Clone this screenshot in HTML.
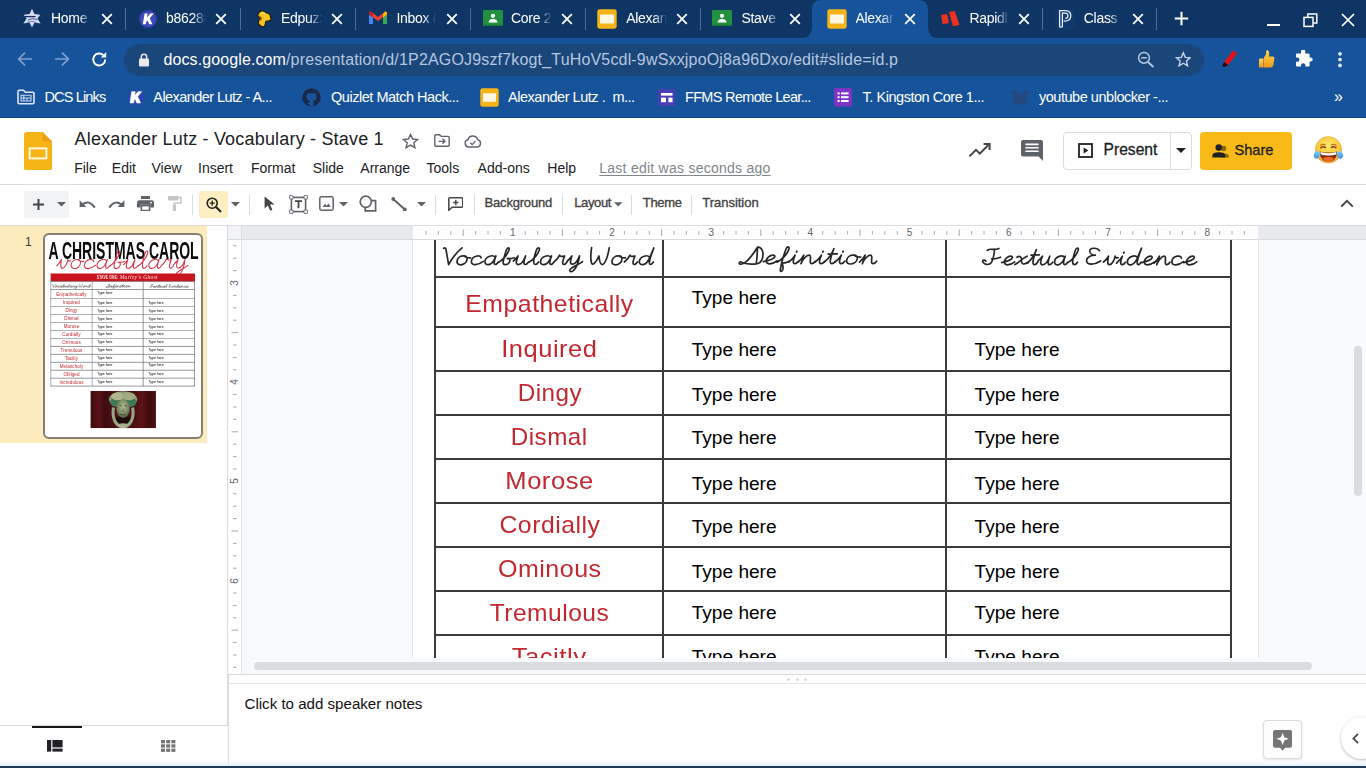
<!DOCTYPE html>
<html>
<head>
<meta charset="utf-8">
<title>Alexander Lutz - Vocabulary - Stave 1 - Google Slides</title>
<style>
*{box-sizing:border-box;margin:0;padding:0}
html,body{width:1366px;height:768px;overflow:hidden;background:#fff;font-family:"Liberation Sans",sans-serif;}
body{position:relative}
.abs{position:absolute}
/* ---------- chrome ---------- */
#tabstrip{position:absolute;left:0;top:0;width:1366px;height:38px;background:#0f3565}
#toolbar{position:absolute;left:0;top:38px;width:1366px;height:80px;background:#16539a;border-bottom:1px solid #0f4186}
.tsep{position:absolute;top:8px;width:1px;height:22px;background:#4c6c9c}
.tabt{position:absolute;top:0;height:38px;line-height:37px;font-size:14px;color:#fff;white-space:nowrap;overflow:hidden;letter-spacing:-0.3px;-webkit-mask-image:linear-gradient(to right,#000 calc(100% - 13px),transparent 100%);mask-image:linear-gradient(to right,#000 calc(100% - 13px),transparent 100%)}
#omni{position:absolute;left:124px;top:44px;width:1080px;height:32px;border-radius:16px;background:#1b4679}
#url{position:absolute;left:163.5px;top:44px;height:32px;line-height:32px;font-size:16px;color:#b4c6e0;white-space:nowrap;letter-spacing:0.17px}
#url b{font-weight:normal;color:#fff;letter-spacing:0.1px}
.bm{position:absolute;top:80px;height:36px;line-height:35px;font-size:14.5px;color:#fff;white-space:nowrap}
/* ---------- slides header ---------- */
#title{position:absolute;left:74.6px;top:126px;font-size:18px;letter-spacing:.19px;color:#202124;line-height:26px;white-space:nowrap}
.menu{position:absolute;top:157.7px;font-size:14px;line-height:20px;color:#202124;white-space:nowrap}
#hline{position:absolute;left:0;top:184px;width:1366px;height:1px;background:#dadce0}
#tline{position:absolute;left:0;top:225px;width:1366px;height:1px;background:#dadce0}
.tbtxt{position:absolute;top:194px;font-size:13px;line-height:18px;color:#444;letter-spacing:-0.35px;-webkit-text-stroke:.35px #444;white-space:nowrap}
.vsep{position:absolute;top:192px;width:1px;height:24px;background:#dadce0}
/* ---------- filmstrip ---------- */
#film{position:absolute;left:0;top:226px;width:228px;height:500px;background:#fff;border-right:1px solid #dadce0}
#filmsel{position:absolute;left:0;top:226px;width:207.3px;height:216.8px;background:#fcebbc}
#thumb{position:absolute;left:42.6px;top:232.6px;width:160.8px;height:206.4px;background:#fff;border:2px solid #857f74;border-radius:6px;overflow:hidden}
/* ---------- canvas ---------- */
#canvas{position:absolute;left:228px;top:226px;width:1138px;height:448px;background:#f8f9fa}
#slide{position:absolute;left:413px;top:240px;width:845px;height:418px;background:#fff;overflow:hidden}
.hl{position:absolute;left:434px;width:797.8px;height:2px;background:#3b3b3b}
.vl{position:absolute;top:240px;width:2px;height:418px;background:#3b3b3b}
.red{position:absolute;color:#c3272f;font-size:24px;line-height:30px;letter-spacing:.5px;white-space:nowrap;transform-origin:50% 50%}
.th{position:absolute;font-size:19.1px;line-height:24px;color:#000;white-space:nowrap}
.rn{position:absolute;width:20px;text-align:center;font-size:10px;line-height:14px;color:#5f6368}
.rv{position:absolute;left:225px;width:20px;height:20px;text-align:center;font-size:10px;line-height:20px;color:#5f6368;transform:rotate(-90deg)}
</style>
</head>
<body>
<div id="tabstrip"></div>
<div id="toolbar"></div>

<div class="tsep" style="left:124.5px"></div>
<div class="tsep" style="left:239.5px"></div>
<div class="tsep" style="left:354.5px"></div>
<div class="tsep" style="left:469.5px"></div>
<div class="tsep" style="left:584.5px"></div>
<div class="tsep" style="left:699.5px"></div>
<div class="tsep" style="left:1041.5px"></div>
<div class="tsep" style="left:1155.5px"></div>
<svg class="abs" style="left:802px;top:0" width="136" height="38" viewBox="0 0 136 38"><path d="M0 38 Q9 38 10 28 V9 Q10 0 20 0 H116 Q126 0 126 9 V28 Q127 38 136 38 Z" fill="#16539a"/></svg>
<svg class="abs" style="left:22px;top:8px" width="20" height="20" viewBox="0 0 20 20"><path d="M10 .8 L12.4 6 L18.3 6.8 L15.4 10.5 L18.6 15.5 L12.6 14.6 L10 19.4 L7.4 14.6 L1.4 15.5 L4.6 10.5 L1.7 6.8 L7.6 6 Z" fill="#d5dcf0"/><path d="M3 8.6 H13.5" stroke="#132c66" stroke-width="1.3"/><path d="M6 12 Q10 9.5 15 11.5" stroke="#44588e" stroke-width="1" fill="none"/><path d="M5 14.2 Q10 12.5 14 14.5" stroke="#6f7fb0" stroke-width="1" fill="none"/></svg>
<div class="tabt" style="left:51.0px;width:41.0px">Home</div>
<svg class="abs" style="left:101px;top:13px" width="12" height="12" viewBox="0 0 12 12"><path d="M1.2 1.2 L10.8 10.8 M10.8 1.2 L1.2 10.8" stroke="#fff" stroke-width="1.8" fill="none"/></svg>
<svg class="abs" style="left:137.5px;top:9px" width="20" height="20" viewBox="0 0 20 20"><circle cx="10" cy="10" r="9.3" fill="#2c3a9a"/><circle cx="10" cy="10" r="8" fill="#3f49b8"/><path d="M6.6 4.6 H9.6 L8.9 8.6 L12.4 4.6 H15.8 L11.7 9.2 L14.4 15.2 H11.2 L9.6 11.4 L8.2 12.9 L7.8 15.2 H4.8 Z" fill="#fff"/></svg>
<div class="tabt" style="left:166.0px;width:40.0px">b86288</div>
<svg class="abs" style="left:215px;top:13px" width="12" height="12" viewBox="0 0 12 12"><path d="M1.2 1.2 L10.8 10.8 M10.8 1.2 L1.2 10.8" stroke="#fff" stroke-width="1.8" fill="none"/></svg>
<svg class="abs" style="left:254px;top:9px" width="20" height="20" viewBox="0 0 20 20"><path d="M7.9 1.6 Q9.4 1.8 10.6 2.8 L12.6 4 Q14.6 4.2 15.3 5.2 Q16.4 6.4 16.5 7.9 L17.3 9.8 Q16.8 11.4 15.3 11.8 L12.2 12.2 Q11.4 13 11.4 14.5 Q11.2 17 9.8 17.7 Q8 18 6.7 16.9 Q4.8 16 4.4 14.5 L4.4 12.2 Q5.2 11 6.3 10.6 L6.7 9.1 L4.4 7.9 Q3.6 6.8 4 5.5 Q4.4 3.8 5.5 3.2 Q6.6 1.8 7.9 1.6 Z" fill="#f9c324" stroke="#1c1a0c" stroke-width="1.2" stroke-linejoin="round"/><path d="M5.4 7.2 L7.6 9.6 L5.6 11.8" stroke="#b9650c" stroke-width="1.3" fill="none"/><path d="M7.4 4 Q9.6 3.4 11.4 5" stroke="#ffe36a" stroke-width="1.4" fill="none"/></svg>
<div class="tabt" style="left:281.0px;width:40.6px">Edpuzzle</div>
<svg class="abs" style="left:330.6px;top:13px" width="12" height="12" viewBox="0 0 12 12"><path d="M1.2 1.2 L10.8 10.8 M10.8 1.2 L1.2 10.8" stroke="#fff" stroke-width="1.8" fill="none"/></svg>
<svg class="abs" style="left:368.5px;top:11px" width="18" height="14" viewBox="0 0 18 14"><path d="M0 2.2 V13 H4 V5.3 Z" fill="#4285f4"/><path d="M18 2.2 V13 H14 V5.3 Z" fill="#34a853"/><path d="M0 2.2 Q0 .4 1.8 .6 L9 6 L9 10 L0 3.4 Z" fill="#ea4335"/><path d="M18 2.2 Q18 .4 16.2 .6 L9 6 L9 10 L18 3.4 Z" fill="#ea4335"/><path d="M14 3 L16.2 .6 Q18 .4 18 2.2 V3.4 L14 6.4 Z" fill="#fbbc04"/><path d="M4 3 L1.8 .6 Q0 .4 0 2.2 V3.4 L4 6.4 Z" fill="#c5221f"/></svg>
<div class="tabt" style="left:396.4px;width:40.1px">Inbox (1</div>
<svg class="abs" style="left:445.5px;top:13px" width="12" height="12" viewBox="0 0 12 12"><path d="M1.2 1.2 L10.8 10.8 M10.8 1.2 L1.2 10.8" stroke="#fff" stroke-width="1.8" fill="none"/></svg>
<svg class="abs" style="left:482.5px;top:10px" width="20" height="17" viewBox="0 0 20 17"><rect x="0" y="0" width="20" height="16" rx="1.2" fill="#21903f"/><rect x="0" y="14.6" width="20" height="1.4" fill="#187a33"/><circle cx="10" cy="5.8" r="2.1" fill="#fff"/><path d="M5.6 12.6 Q5.6 9 10 9 Q14.4 9 14.4 12.6 Z" fill="#fff"/></svg>
<div class="tabt" style="left:511.0px;width:40.7px">Core 2 </div>
<svg class="abs" style="left:560.7px;top:13px" width="12" height="12" viewBox="0 0 12 12"><path d="M1.2 1.2 L10.8 10.8 M10.8 1.2 L1.2 10.8" stroke="#fff" stroke-width="1.8" fill="none"/></svg>
<svg class="abs" style="left:597.4px;top:9px" width="20" height="20" viewBox="0 0 20 20"><rect x=".3" y=".3" width="19.4" height="19.4" rx="2.4" fill="#f5b417"/><rect x="3" y="5.6" width="14" height="8.8" rx=".6" fill="#fff7e4"/></svg>
<div class="tabt" style="left:626.2px;width:40.4px">Alexande</div>
<svg class="abs" style="left:675.6px;top:13px" width="12" height="12" viewBox="0 0 12 12"><path d="M1.2 1.2 L10.8 10.8 M10.8 1.2 L1.2 10.8" stroke="#fff" stroke-width="1.8" fill="none"/></svg>
<svg class="abs" style="left:712px;top:10px" width="20" height="17" viewBox="0 0 20 17"><rect x="0" y="0" width="20" height="16" rx="1.2" fill="#21903f"/><rect x="0" y="14.6" width="20" height="1.4" fill="#187a33"/><circle cx="10" cy="5.8" r="2.1" fill="#fff"/><path d="M5.6 12.6 Q5.6 9 10 9 Q14.4 9 14.4 12.6 Z" fill="#fff"/></svg>
<div class="tabt" style="left:741.4px;width:39.0px">Stave 1</div>
<svg class="abs" style="left:789.4px;top:13px" width="12" height="12" viewBox="0 0 12 12"><path d="M1.2 1.2 L10.8 10.8 M10.8 1.2 L1.2 10.8" stroke="#fff" stroke-width="1.8" fill="none"/></svg>
<svg class="abs" style="left:826.6px;top:9px" width="20" height="20" viewBox="0 0 20 20"><rect x=".3" y=".3" width="19.4" height="19.4" rx="2.4" fill="#f5b417"/><rect x="3" y="5.6" width="14" height="8.8" rx=".6" fill="#fff7e4"/></svg>
<div class="tabt" style="left:855.5px;width:39.3px">Alexande</div>
<svg class="abs" style="left:903.8px;top:13px" width="12" height="12" viewBox="0 0 12 12"><path d="M1.2 1.2 L10.8 10.8 M10.8 1.2 L1.2 10.8" stroke="#fff" stroke-width="1.8" fill="none"/></svg>
<svg class="abs" style="left:940.4px;top:10px" width="20" height="17" viewBox="0 0 20 17"><path d="M1 5.1 L7.2 4 L8.9 13.3 L2.5 14.1 Z" fill="#ee311e"/><path d="M8.9 2 L14.8 1 L19.5 15.1 L13 16.2 Z" fill="#ee311e"/></svg>
<div class="tabt" style="left:969.4px;width:39.3px">Rapidly</div>
<svg class="abs" style="left:1017.7px;top:13px" width="12" height="12" viewBox="0 0 12 12"><path d="M1.2 1.2 L10.8 10.8 M10.8 1.2 L1.2 10.8" stroke="#fff" stroke-width="1.8" fill="none"/></svg>
<svg class="abs" style="left:1054.6px;top:9px" width="20" height="20" viewBox="0 0 20 20"><rect x="0" y="0" width="20" height="20" fill="#11396c"/><path d="M4.6 18 V1.6 H10.4 Q15.8 1.8 15.8 6.8 Q15.8 11.6 10.6 12 L8.6 12 M7.4 18 V4.2 H10.2 Q13 4.4 13 6.8 Q13 9.2 10.2 9.4 M4.6 18 H7.4" fill="none" stroke="#e8f0ff" stroke-width="1.25"/></svg>
<div class="tabt" style="left:1083.8px;width:38.7px">Class S</div>
<svg class="abs" style="left:1131.5px;top:13px" width="12" height="12" viewBox="0 0 12 12"><path d="M1.2 1.2 L10.8 10.8 M10.8 1.2 L1.2 10.8" stroke="#fff" stroke-width="1.8" fill="none"/></svg>
<svg class="abs" style="left:1174px;top:11px" width="15" height="15" viewBox="0 0 15 15"><path d="M7.5 .8 V14.2 M.8 7.5 H14.2" stroke="#fff" stroke-width="2"/></svg>
<div class="abs" style="left:1267px;top:24px;width:13px;height:2px;background:#fff"></div>
<svg class="abs" style="left:1303px;top:13px" width="15" height="15" viewBox="0 0 15 15"><path d="M4.8 4 V1 H13.8 V10 H10.6" fill="none" stroke="#fff" stroke-width="1.5"/><rect x="1" y="4.4" width="9" height="9" fill="none" stroke="#fff" stroke-width="1.5"/></svg>
<svg class="abs" style="left:1341px;top:13px" width="14" height="14" viewBox="0 0 14 14"><path d="M1 1 L13 13 M13 1 L1 13" stroke="#fff" stroke-width="1.7"/></svg>
<div id="omni"></div>
<div id="url"><b>docs.google.com</b>/presentation/d/1P2AGOJ9szf7kogt_TuHoV5cdl-9wSxxjpoOj8a96Dxo/edit#slide=id.p</div>

<!-- nav icons -->
<svg class="abs" style="left:17px;top:51px" width="16" height="16" viewBox="0 0 16 16"><path d="M15 8 H2 M8 1.6 L1.6 8 L8 14.4" fill="none" stroke="#7f9fd0" stroke-width="1.7"/></svg>
<svg class="abs" style="left:54px;top:51px" width="16" height="16" viewBox="0 0 16 16"><path d="M1 8 H14 M8 1.6 L14.4 8 L8 14.4" fill="none" stroke="#7f9fd0" stroke-width="1.7"/></svg>
<svg class="abs" style="left:91px;top:51px" width="17" height="17" viewBox="0 0 17 17"><path d="M14.2 8.5 A6 6 0 1 1 12.4 4.2" fill="none" stroke="#fff" stroke-width="1.9"/><path d="M15.2 1 V6.4 H9.8 Z" fill="#fff"/></svg>
<svg class="abs" style="left:138px;top:53px" width="12" height="14" viewBox="0 0 12 14"><rect x="1" y="5.4" width="10" height="8" rx="1.2" fill="#e9e9ea"/><path d="M3.3 6 V4 A2.7 2.7 0 0 1 8.7 4 V6" fill="none" stroke="#e9e9ea" stroke-width="1.5"/></svg>
<svg class="abs" style="left:1137px;top:51px" width="18" height="17" viewBox="0 0 18 17"><circle cx="7" cy="6.8" r="5.4" fill="none" stroke="#b9c8e2" stroke-width="1.5"/><path d="M11 11 L16.4 16" stroke="#b9c8e2" stroke-width="1.8"/><path d="M4.2 6.8 H9.8" stroke="#b9c8e2" stroke-width="1.5"/></svg>
<svg class="abs" style="left:1174.8px;top:50.6px" width="16.6" height="16.6" viewBox="0 0 18 18"><path d="M9 2 L11.1 6.9 L16.4 7.4 L12.4 10.9 L13.6 16.1 L9 13.3 L4.4 16.1 L5.6 10.9 L1.6 7.4 L6.9 6.9 Z" fill="none" stroke="#c9d5ea" stroke-width="1.5" stroke-linejoin="miter"/></svg>
<!-- extensions -->
<svg class="abs" style="left:1220px;top:49px" width="19" height="20" viewBox="0 0 19 20"><path d="M13.2 1.6 L17 4.6 L8 16 L4 13 Z" fill="#e01217"/><path d="M4 13 L8 16 L5 17.8 L2 17.6 Z" fill="#2a0a10"/></svg>
<svg class="abs" style="left:1257px;top:49px" width="19" height="20" viewBox="0 0 19 20"><defs><linearGradient id="tg" x1="0" y1="0" x2="0" y2="1"><stop offset="0" stop-color="#fdd54a"/><stop offset="1" stop-color="#f29a1c"/></linearGradient></defs><path d="M2 9.6 H6 V18.4 H2 Z" fill="url(#tg)"/><path d="M6.4 9.4 L9 5.2 L9.2 2 Q9.4 .8 10.6 1.2 Q12.4 2 12.2 4.6 L11.8 7.6 H16 Q17.8 7.8 17.4 9.6 L16.2 16.6 Q15.8 18.4 14 18.4 H6.4 Z" fill="url(#tg)"/></svg>
<svg class="abs" style="left:1294px;top:50px" width="19" height="18" viewBox="0 0 19 18"><path d="M7 1.2 A2.1 2.1 0 0 1 11.2 1.6 V3.4 H14.6 Q15.6 3.4 15.6 4.4 V7.4 H16.6 A2.1 2.1 0 0 1 16.6 11.6 H15.6 V15.6 Q15.6 16.6 14.6 16.6 H11.4 V15.4 A2.2 2.2 0 0 0 7 15.4 V16.6 H3 Q2 16.6 2 15.6 V11.8 H3.2 A2.1 2.1 0 0 0 3.2 7.4 H2 V4.4 Q2 3.4 3 3.4 H7 Z" fill="#fbfbf6"/></svg>
<svg class="abs" style="left:1337px;top:50px" width="6" height="19" viewBox="0 0 6 19"><circle cx="3" cy="3.8" r="1.85" fill="#e6eefb"/><circle cx="3" cy="9.6" r="1.85" fill="#e6eefb"/><circle cx="3" cy="15.4" r="1.85" fill="#e6eefb"/></svg>
<!-- bookmarks -->
<svg class="abs" style="left:17px;top:89px" width="18" height="16" viewBox="0 0 18 16"><path d="M1 2.4 Q1 1.2 2.2 1.2 H6.6 L8.4 3.2 H15.8 Q17 3.2 17 4.4 V13.6 Q17 14.8 15.8 14.8 H2.2 Q1 14.8 1 13.6 Z" fill="none" stroke="#dfe7f5" stroke-width="1.6"/><path d="M4 6.2 H14 V12 H4 Z M4 9 H14 M6.8 6.2 V12 M10 9 V12" fill="none" stroke="#c9d6ee" stroke-width="1.1"/></svg>
<div class="bm" style="left:44.5px;letter-spacing:-0.85px">DCS Links</div>
<svg class="abs" style="left:127.5px;top:88.6px" width="16.4" height="16.4" viewBox="0 0 16 16"><circle cx="8" cy="8" r="7.8" fill="#2c44b2"/><path d="M3.6 2.6 H7 L6.4 6.6 L9.8 2.6 H13.4 L9.4 7.2 L12.2 13.6 H8.6 L7.2 9.8 L5.9 11.2 L5.5 13.6 H2 Z" fill="#fff" stroke="#fff" stroke-width=".6" stroke-linejoin="round"/></svg>
<div class="bm" style="left:153.3px;letter-spacing:-0.57px">Alexander Lutz - A...</div>
<svg class="abs" style="left:302px;top:88px" width="19" height="19" viewBox="0 0 19 19"><circle cx="9.5" cy="9.5" r="9.2" fill="#182848"/><path d="M5.2 4.4 L6.8 5.6 Q9.5 4.8 12.2 5.6 L13.8 4.4 L14 7 Q15.2 9 14.2 11 Q13.2 12.8 11 13 L11.6 14.4 V18 H7.4 V16 Q5.4 16.4 4.6 14.4 Q6 15.4 7.4 14.6 L8 13 Q5.8 12.8 4.8 11 Q3.8 9 5 7 Z" fill="#19539b"/></svg>
<div class="bm" style="left:331px;letter-spacing:-0.47px">Quizlet Match Hack...</div>
<svg class="abs" style="left:479.5px;top:88px" width="19" height="19" viewBox="0 0 19 19"><rect x=".3" y=".3" width="18.4" height="18.4" rx="2.2" fill="#f5b417"/><rect x="3" y="5.2" width="13" height="8.6" rx=".6" fill="#fff7e4"/></svg>
<div class="bm" style="left:508px;letter-spacing:-0.47px">Alexander Lutz .&nbsp; m...</div>
<svg class="abs" style="left:657.5px;top:89px" width="17.5" height="17" viewBox="0 0 17.5 17"><rect x="0" y="0" width="17.5" height="17" rx="1.4" fill="#4a3eb6"/><rect x="3" y="4" width="11.5" height="2.6" fill="#fff"/><rect x="3" y="8.6" width="5" height="4.6" fill="#fff"/><rect x="10.4" y="8.6" width="4.1" height="4.6" fill="#fff"/></svg>
<div class="bm" style="left:685px;letter-spacing:-0.68px">FFMS Remote Lear...</div>
<svg class="abs" style="left:834px;top:88px" width="18" height="18.5" viewBox="0 0 18 18.5"><rect x="0" y="0" width="18" height="18.5" rx="1.6" fill="#7d34c4"/><g fill="#fff"><rect x="3.6" y="4.4" width="2" height="2"/><rect x="7" y="4.4" width="7.6" height="2"/><rect x="3.6" y="8.2" width="2" height="2"/><rect x="7" y="8.2" width="7.6" height="2"/><rect x="3.6" y="12" width="2" height="2"/><rect x="7" y="12" width="7.6" height="2"/></g></svg>
<div class="bm" style="left:862.6px;letter-spacing:-0.47px">T. Kingston Core 1...</div>
<svg class="abs" style="left:1011px;top:90.5px" width="18" height="14" viewBox="0 0 18 14"><path d="M1 1 H5 L6.6 8.4 L9 2.6 L11.4 8.4 L13 1 H17 L13.8 12.6 H10.4 L9 9 L7.6 12.6 H4.2 Z" fill="#1c4a86" stroke="#27457a" stroke-width="1.7" stroke-linejoin="round"/></svg>
<div class="bm" style="left:1039px;letter-spacing:-0.47px">youtube unblocker -...</div>
<div class="bm" style="left:1334px;font-size:16px;line-height:33px">»</div>

<!-- slides logo -->
<svg class="abs" style="left:23.5px;top:131.5px" width="28" height="38.5" viewBox="0 0 28 38.5"><path d="M2.6 0 H18.6 L28 9.4 V35.9 Q28 38.5 25.4 38.5 H2.6 Q0 38.5 0 35.9 V2.6 Q0 0 2.6 0 Z" fill="#f6b517"/><path d="M18.6 0 L28 9.4 H21 Q18.6 9.4 18.6 7 Z" fill="#f09d0e"/><rect x="5.6" y="16.4" width="16.8" height="10" fill="none" stroke="#fff6dc" stroke-width="2"/></svg>
<div id="title">Alexander Lutz - Vocabulary - Stave 1</div>
<svg class="abs" style="left:402px;top:132.5px" width="17" height="16" viewBox="0 0 17 16"><path d="M8.5 1.4 L10.6 6 L15.6 6.5 L11.8 9.8 L12.9 14.7 L8.5 12.1 L4.1 14.7 L5.2 9.8 L1.4 6.5 L6.4 6 Z" fill="none" stroke="#5f6368" stroke-width="1.4"/></svg>
<svg class="abs" style="left:433.5px;top:134px" width="16" height="13" viewBox="0 0 16 13"><path d="M.8 1.8 Q.8 .8 1.8 .8 H5.6 L7.2 2.4 H14.2 Q15.2 2.4 15.2 3.4 V11.2 Q15.2 12.2 14.2 12.2 H1.8 Q.8 12.2 .8 11.2 Z" fill="none" stroke="#5f6368" stroke-width="1.4"/><path d="M4.6 7.3 H10.6 M8.4 4.8 L11 7.3 L8.4 9.8" fill="none" stroke="#5f6368" stroke-width="1.3"/></svg>
<svg class="abs" style="left:464px;top:134.5px" width="18" height="13" viewBox="0 0 18 13"><path d="M4.6 12 A3.7 3.7 0 0 1 4 4.7 A5 5 0 0 1 13.6 4.6 A3.8 3.8 0 0 1 13.6 12 Z" fill="none" stroke="#5f6368" stroke-width="1.4"/><path d="M6.4 7.8 L8.2 9.6 L11.4 6.2" fill="none" stroke="#5f6368" stroke-width="1.3"/></svg>
<!-- menus -->
<div class="menu" style="left:74.2px">File</div>
<div class="menu" style="left:111.8px">Edit</div>
<div class="menu" style="left:151.5px">View</div>
<div class="menu" style="left:198px">Insert</div>
<div class="menu" style="left:251px">Format</div>
<div class="menu" style="left:312.7px">Slide</div>
<div class="menu" style="left:360.3px">Arrange</div>
<div class="menu" style="left:426.5px">Tools</div>
<div class="menu" style="left:477.6px">Add-ons</div>
<div class="menu" style="left:547.3px">Help</div>
<div class="menu" style="left:599.3px;color:#80868b;letter-spacing:.25px;text-decoration:underline;text-underline-offset:2px">Last edit was seconds ago</div>
<!-- right side -->
<svg class="abs" style="left:968px;top:143px" width="23" height="15" viewBox="0 0 23 15"><path d="M1.4 13.4 L8 6.8 L11.8 10.6 L20.6 1.8" fill="none" stroke="#444746" stroke-width="2"/><path d="M15.6 1 H21.6 V7" fill="none" stroke="#444746" stroke-width="2"/></svg>
<svg class="abs" style="left:1021px;top:140px" width="22" height="21" viewBox="0 0 22 21"><path d="M2 0 H20 Q22 0 22 2 V21 L17.6 16.6 H2 Q0 16.6 0 14.6 V2 Q0 0 2 0 Z" fill="#5f6368"/><path d="M4.4 4.4 H17.6 M4.4 7.8 H17.6 M4.4 11.2 H17.6" stroke="#fff" stroke-width="1.6"/></svg>
<div class="abs" style="left:1063px;top:132px;width:129px;height:38px;border:1px solid #dadce0;border-radius:4px;background:#fff"></div>
<div class="abs" style="left:1170px;top:132px;width:1px;height:38px;background:#dadce0"></div>
<svg class="abs" style="left:1077.5px;top:143px" width="15" height="15" viewBox="0 0 15 15"><rect x="1" y="1" width="13" height="13" fill="none" stroke="#202124" stroke-width="1.8"/><path d="M5.6 4.4 L10.4 7.5 L5.6 10.6 Z" fill="#202124"/></svg>
<div class="abs" style="left:1103.6px;top:140px;font-size:15.6px;line-height:20px;color:#202124;-webkit-text-stroke:.3px #202124">Present</div>
<svg class="abs" style="left:1175.5px;top:148px" width="10" height="5" viewBox="0 0 10 5"><path d="M0 0 H10 L5 5 Z" fill="#202124"/></svg>
<div class="abs" style="left:1200px;top:132px;width:92px;height:38px;border-radius:4px;background:#f9b917"></div>
<svg class="abs" style="left:1212px;top:144px" width="18" height="14" viewBox="0 0 18 14"><circle cx="11.6" cy="4.4" r="2.6" fill="#8a6508"/><path d="M9.6 13.6 V11.6 Q9.6 9.6 12 9.4 Q16.8 9.4 16.8 12 V13.6 Z" fill="#8a6508"/><circle cx="6.8" cy="3.6" r="3.3" fill="#202124"/><path d="M.4 13.6 V11.4 Q.4 8.2 6.8 8.2 Q13.2 8.2 13.2 11.4 V13.6 Z" fill="#202124"/></svg>
<div class="abs" style="left:1234.5px;top:140px;font-size:14.6px;line-height:20px;color:#202124;-webkit-text-stroke:.3px #202124">Share</div>
<!-- avatar emoji -->
<svg class="abs" style="left:1313px;top:135px" width="31" height="29" viewBox="0 0 31 29"><defs><radialGradient id="eg" cx=".5" cy=".32" r=".72"><stop offset="0" stop-color="#fde668"/><stop offset=".6" stop-color="#fac83c"/><stop offset="1" stop-color="#ee9a2e"/></radialGradient><linearGradient id="tr" x1="0" y1="0" x2="0" y2="1"><stop offset="0" stop-color="#7fd6f4"/><stop offset="1" stop-color="#3a8ee6"/></linearGradient></defs><circle cx="15.4" cy="14.8" r="13.2" fill="url(#eg)" stroke="#e9a24a" stroke-width=".6"/><path d="M7.2 10.6 Q10 8.4 12.6 10 M18.2 10 Q20.8 8.4 23.6 10.6" fill="none" stroke="#b8741c" stroke-width="1.1"/><path d="M7.4 13.2 Q10 10.6 12.8 12.8 M18 12.8 Q20.8 10.6 23.4 13.2" fill="none" stroke="#8a3a14" stroke-width="1.5"/><path d="M6.6 16.4 Q15.4 18.8 24.2 16.4 Q23.8 26.4 15.4 26.6 Q7 26.4 6.6 16.4 Z" fill="#8a2c10"/><path d="M7.4 17 Q15.4 19.4 23.4 17 L23 19.4 Q15.4 21.4 7.8 19.4 Z" fill="#fff"/><path d="M9.4 23.4 Q15.4 20.6 21.4 23.4 Q18.6 26.4 15.4 26.4 Q12.2 26.4 9.4 23.4 Z" fill="#ea6a2a"/><ellipse cx="3.9" cy="19.8" rx="3" ry="3.9" transform="rotate(20 3.9 19.8)" fill="url(#tr)"/><ellipse cx="26.9" cy="19.8" rx="3" ry="3.9" transform="rotate(-20 26.9 19.8)" fill="url(#tr)"/></svg>
<!-- toolbar -->
<div class="abs" style="left:24px;top:191px;width:45px;height:27px;background:#f1f3f4;border-radius:3px"></div>
<svg class="abs" style="left:33px;top:198.5px" width="11" height="11" viewBox="0 0 11 11"><path d="M5.5 0 V11 M0 5.5 H11" stroke="#444" stroke-width="2"/></svg>
<svg class="abs dd" style="left:56.6px;top:202px" width="9" height="4.5" viewBox="0 0 10 5"><path d="M0 0 H10 L5 5 Z" fill="#5f6368"/></svg>
<svg class="abs" style="left:78.5px;top:199px" width="17" height="10" viewBox="0 0 17 10"><path d="M3.6 5.6 Q9.8 .2 15.8 8.6" fill="none" stroke="#5f6368" stroke-width="2"/><path d="M.6 1.2 V8 H7.4 Z" fill="#5f6368"/></svg>
<svg class="abs" style="left:107.8px;top:199px" width="17" height="10" viewBox="0 0 17 10"><path d="M13.4 5.6 Q7.2 .2 1.2 8.6" fill="none" stroke="#5f6368" stroke-width="2"/><path d="M16.4 1.2 V8 H9.6 Z" fill="#5f6368"/></svg>
<svg class="abs" style="left:136.5px;top:196px" width="17" height="15" viewBox="0 0 17 15"><rect x="4" y="0" width="9" height="3" fill="#5f6368"/><path d="M2.2 4.2 H14.8 Q17 4.2 17 6.4 V11.4 H13.4 V8.8 H3.6 V11.4 H0 V6.4 Q0 4.2 2.2 4.2 Z" fill="#5f6368"/><rect x="4.4" y="9.6" width="8.2" height="5" fill="none" stroke="#5f6368" stroke-width="1.6"/><circle cx="14" cy="6.6" r=".9" fill="#fff"/></svg>
<svg class="abs" style="left:168px;top:196px" width="14" height="15" viewBox="0 0 14 15"><rect x="0" y="0" width="10.6" height="4.6" rx=".8" fill="#c4c7c9"/><path d="M10.6 1.6 H13 V7 H6.4 V9" fill="none" stroke="#c4c7c9" stroke-width="1.5"/><rect x="4.8" y="8.6" width="3.2" height="6.4" fill="#c4c7c9"/></svg>
<div class="vsep" style="left:192px;top:195px;height:20px"></div>
<div class="abs" style="left:199px;top:191px;width:29px;height:27px;background:#feefc3;border-radius:3px"></div>
<svg class="abs" style="left:205.5px;top:196.5px" width="16" height="16" viewBox="0 0 16 16"><circle cx="6.2" cy="6.2" r="5" fill="none" stroke="#202124" stroke-width="1.6"/><path d="M9.8 9.8 L15 15" stroke="#202124" stroke-width="2"/><path d="M3.6 6.2 H8.8 M6.2 3.6 V8.8" stroke="#202124" stroke-width="1.3"/></svg>
<svg class="abs" style="left:231.4px;top:202px" width="9" height="4.5" viewBox="0 0 10 5"><path d="M0 0 H10 L5 5 Z" fill="#5f6368"/></svg>
<div class="vsep" style="left:249px;top:195px;height:20px"></div>
<svg class="abs" style="left:263.5px;top:196px" width="12" height="15" viewBox="0 0 12 15"><path d="M.6 .4 V12.4 L3.8 9.4 L6.2 14.8 L8.4 13.8 L6 8.6 H10.6 Z" fill="#444746"/></svg>
<svg class="abs" style="left:288.5px;top:194.5px" width="19" height="19" viewBox="0 0 19 19"><rect x="2.4" y="2.4" width="14.2" height="14.2" fill="none" stroke="#5f6368" stroke-width="1.6"/><g fill="#fff" stroke="#5f6368" stroke-width="1"><rect x=".6" y=".6" width="3.4" height="3.4" rx=".6"/><rect x="15" y=".6" width="3.4" height="3.4" rx=".6"/><rect x=".6" y="15" width="3.4" height="3.4" rx=".6"/><rect x="15" y="15" width="3.4" height="3.4" rx=".6"/></g><path d="M6 6.2 H13 M9.5 6.2 V13.2" stroke="#444746" stroke-width="1.8" fill="none"/></svg>
<svg class="abs" style="left:318.5px;top:196px" width="15" height="15" viewBox="0 0 15 15"><rect x=".8" y=".8" width="13.4" height="13.4" rx="1.6" fill="none" stroke="#5f6368" stroke-width="1.5"/><path d="M3.6 11 L6 7.8 L7.6 9.8 L9.6 7.4 L11.6 11 Z" fill="#5f6368"/></svg>
<svg class="abs" style="left:338.6px;top:202px" width="9" height="4.5" viewBox="0 0 10 5"><path d="M0 0 H10 L5 5 Z" fill="#5f6368"/></svg>
<svg class="abs" style="left:358.5px;top:195px" width="18" height="17" viewBox="0 0 18 17"><path d="M12.4 5.6 H16.6 V15.8 H6.2 V12.6" fill="none" stroke="#5f6368" stroke-width="1.7"/><circle cx="6.8" cy="6.8" r="5.6" fill="#fff" stroke="#5f6368" stroke-width="1.7"/></svg>
<svg class="abs" style="left:391px;top:196.5px" width="16" height="14.5" viewBox="0 0 16 14.5"><path d="M2.4 2.2 L13.6 12.2" stroke="#5f6368" stroke-width="2"/><circle cx="2.2" cy="2" r="1.9" fill="#5f6368"/><circle cx="13.8" cy="12.4" r="1.9" fill="#5f6368"/></svg>
<svg class="abs" style="left:417px;top:202px" width="9" height="4.5" viewBox="0 0 10 5"><path d="M0 0 H10 L5 5 Z" fill="#5f6368"/></svg>
<div class="vsep" style="left:435px;top:195px;height:20px"></div>
<svg class="abs" style="left:447.5px;top:196.5px" width="15.5" height="14" viewBox="0 0 15.5 14"><path d="M1.6 .8 H13.9 Q14.7 .8 14.7 1.6 V9.4 Q14.7 10.2 13.9 10.2 H4.2 L.8 13.2 V1.6 Q.8 .8 1.6 .8 Z" fill="none" stroke="#444746" stroke-width="1.5"/><path d="M7.8 2.8 V8.2 M5.1 5.5 H10.5" stroke="#444746" stroke-width="1.4"/></svg>
<div class="vsep" style="left:474px;top:195px;height:20px"></div>
<div class="tbtxt" style="left:484.6px;letter-spacing:-.2px">Background</div>
<div class="vsep" style="left:562px;top:195px;height:20px"></div>
<div class="tbtxt" style="left:574.2px">Layout</div>
<svg class="abs" style="left:613.5px;top:202px" width="8.5" height="4.5" viewBox="0 0 10 5"><path d="M0 0 H10 L5 5 Z" fill="#5f6368"/></svg>
<div class="vsep" style="left:631px;top:195px;height:20px"></div>
<div class="tbtxt" style="left:642.8px">Theme</div>
<div class="vsep" style="left:691px;top:195px;height:20px"></div>
<div class="tbtxt" style="left:702.3px;letter-spacing:-.03px">Transition</div>
<svg class="abs" style="left:1340px;top:199px" width="14" height="9" viewBox="0 0 14 9"><path d="M1.2 7.6 L7 1.8 L12.8 7.6" fill="none" stroke="#444746" stroke-width="2"/></svg>

<div id="hline"></div>
<div id="tline"></div>
<div id="film"></div>
<div id="filmsel"></div>
<div class="abs" style="left:21.3px;top:233.5px;width:14px;text-align:center;font-size:12px;line-height:16px;color:#3c3a30">1</div>

<div id="canvas"></div>

<div id="thumb"></div>
<div class="abs" id="tslide" style="left:46.9px;top:236.9px;width:843.2px;height:1091.2px;transform-origin:0 0;transform:scale(0.1807);overflow:hidden">
<div class="abs" id="ttitle" style="left:8px;top:10px;height:130px;line-height:130px;font-size:129px;font-weight:bold;color:#0b0b0b;white-space:nowrap;transform-origin:0 50%;transform:scaleX(0.6)">A CHRISTMAS CAROL</div>
<svg class="abs" style="left:0;top:0" width="844" height="1092" viewBox="0 0 844 1092"><path d="M 54.0,159.3 C 65.8,147.7 75.2,136.1 80.3,124.6 C 73.6,153.5 75.0,173.7 84.8,173.7 C 97.0,173.7 112.8,147.7 114.5,124.6 C 116.0,133.8 123.0,135.0 130.2,132.7 M 168.7,124.6 C 150.8,122.8 136.8,136.1 133.6,152.3 C 130.6,167.9 140.8,176.6 154.4,175.4 C 170.7,173.7 183.8,159.3 185.1,143.1 C 185.9,129.2 178.1,123.4 168.7,124.6 C 175.8,133.2 187.3,136.1 202.8,135.0 M 257.4,136.1 C 258.3,126.9 248.4,122.3 236.9,124.6 C 220.3,128.0 208.5,141.9 207.4,154.6 C 206.0,168.5 215.4,175.4 228.9,174.9 C 242.6,173.7 256.5,166.2 268.1,155.8 M 329.5,132.7 C 324.3,123.4 312.5,121.7 301.8,125.7 C 287.1,131.5 278.1,144.2 277.2,155.8 C 276.1,168.5 284.2,175.4 295.5,174.3 C 308.0,172.6 319.7,159.3 327.3,141.9 L 333.8,124.6 C 326.7,144.8 319.4,170.8 329.7,173.7 C 335.5,174.9 341.5,167.4 346.5,159.3 M 345.8,162.2 C 366.7,150.6 392.4,118.8 400.9,89.9 C 405.3,73.7 392.8,72.6 387.5,89.9 C 379.0,118.8 369.7,153.5 371.4,167.4 C 374.8,178.9 393.6,176.6 401.7,162.7 C 410.1,147.7 404.2,136.1 392.4,139.6 C 402.5,140.8 415.0,139.6 428.2,135.0 M 424.0,153.5 C 433.4,144.2 443.1,133.8 447.7,124.6 C 440.5,145.4 431.4,173.7 448.4,174.3 C 464.2,174.3 478.9,147.7 486.7,124.6 C 478.1,151.2 472.9,173.7 485.1,173.7 C 491.2,173.7 496.9,167.4 501.8,159.3 M 501.1,162.2 C 522.1,150.6 549.0,118.8 556.9,89.9 C 561.3,73.7 547.5,72.6 542.3,89.9 C 531.2,124.6 520.4,173.7 536.2,173.7 C 542.3,173.7 548.5,167.9 553.6,159.3 M 615.8,132.7 C 610.7,123.4 598.9,121.7 588.2,125.7 C 573.4,131.5 564.4,144.2 563.5,155.8 C 562.4,168.5 570.6,175.4 581.8,174.3 C 594.4,172.6 606.0,159.3 613.7,141.9 L 620.1,124.6 C 613.0,144.8 605.8,170.8 616.0,173.7 C 621.9,174.9 627.9,167.4 632.8,159.3 M 632.8,159.3 C 643.5,150.0 655.5,135.0 661.4,120.0 C 664.4,128.0 677.5,129.2 687.1,124.6 C 679.3,147.7 670.9,173.7 684.3,173.7 C 690.4,173.7 694.9,167.4 699.8,159.3 M 701.2,153.5 C 710.6,144.2 720.3,133.8 724.9,124.6 C 717.7,145.4 711.5,172.0 727.3,172.0 C 743.2,172.0 756.1,147.7 763.9,124.6 C 759.5,159.3 747.8,193.9 732.2,209.0 C 720.5,219.9 710.1,214.7 715.2,203.2 C 721.8,188.2 756.7,176.6 779.6,156.9" fill="none" stroke="#d4374a" stroke-width="6" stroke-linecap="round" stroke-linejoin="round"/></svg>
<div class="abs" style="left:19.5px;top:201.5px;width:799px;height:44px;background:#c9131d"></div>
<div class="abs" style="left:19.5px;top:201.5px;width:799px;height:44px;line-height:44px;text-align:center;color:#fbe9ea;font-size:27px;white-space:nowrap"><b style="display:inline-block;transform:scaleX(.7);transform-origin:100% 50%;letter-spacing:1px">STAVE ONE:</b> <i style="font-family:'Liberation Serif',serif;font-size:30px;letter-spacing:2px">Marley's Ghost</i></div>
<div class="abs" style="left:19.5px;top:243.4px;width:799px;height:3.6px;background:#70727a"></div>
<div class="abs" style="left:19.5px;top:289.3px;width:799px;height:3.6px;background:#70727a"></div>
<div class="abs" style="left:19.5px;top:339.8px;width:799px;height:3.6px;background:#70727a"></div>
<div class="abs" style="left:19.5px;top:383.8px;width:799px;height:3.6px;background:#70727a"></div>
<div class="abs" style="left:19.5px;top:427.8px;width:799px;height:3.6px;background:#70727a"></div>
<div class="abs" style="left:19.5px;top:471.5px;width:799px;height:3.6px;background:#70727a"></div>
<div class="abs" style="left:19.5px;top:515.7px;width:799px;height:3.6px;background:#70727a"></div>
<div class="abs" style="left:19.5px;top:559.5px;width:799px;height:3.6px;background:#70727a"></div>
<div class="abs" style="left:19.5px;top:603.4px;width:799px;height:3.6px;background:#70727a"></div>
<div class="abs" style="left:19.5px;top:647.3px;width:799px;height:3.6px;background:#70727a"></div>
<div class="abs" style="left:19.5px;top:691.3px;width:799px;height:3.6px;background:#70727a"></div>
<div class="abs" style="left:19.5px;top:735.3px;width:799px;height:3.6px;background:#70727a"></div>
<div class="abs" style="left:19.5px;top:779.3px;width:799px;height:3.6px;background:#70727a"></div>
<div class="abs" style="left:19.5px;top:823.3px;width:799px;height:3.6px;background:#70727a"></div>
<div class="abs" style="left:19.6px;top:245px;width:3.6px;height:581px;background:#70727a"></div>
<div class="abs" style="left:247.9px;top:245px;width:3.6px;height:581px;background:#70727a"></div>
<div class="abs" style="left:530.4px;top:245px;width:3.6px;height:581px;background:#70727a"></div>
<div class="abs" style="left:815.4px;top:245px;width:3.6px;height:581px;background:#70727a"></div>
<svg class="abs" style="left:0;top:0" width="844" height="1092" viewBox="0 0 844 1092"><path d="M 30.0,262.7 C 31.0,261.9 32.0,262.3 32.3,263.3 L 35.0,278.9 C 38.6,272.3 43.2,266.3 48.5,262.1 M 50.3,270.3 C 46.8,270.0 44.1,272.3 43.5,275.1 C 42.9,277.8 44.9,279.3 47.5,279.1 C 50.7,278.8 53.2,276.3 53.5,273.5 C 53.6,271.1 52.1,270.1 50.3,270.3 C 51.7,271.8 53.9,272.3 56.9,272.1 M 67.5,272.3 C 67.7,270.7 65.8,269.9 63.5,270.3 C 60.3,270.9 58.0,273.3 57.8,275.5 C 57.5,277.9 59.3,279.1 62.0,279.0 C 64.6,278.8 67.3,277.5 69.6,275.7 M 81.5,271.7 C 80.5,270.1 78.2,269.8 76.1,270.5 C 73.3,271.5 71.5,273.7 71.4,275.7 C 71.1,277.9 72.7,279.1 74.9,278.9 C 77.3,278.6 79.6,276.3 81.1,273.3 L 82.3,270.3 C 81.0,273.8 79.5,278.3 81.5,278.8 C 82.7,279.0 83.8,277.7 84.8,276.3 M 84.7,276.8 C 88.7,274.8 93.7,269.3 95.4,264.3 C 96.2,261.5 93.8,261.3 92.8,264.3 C 91.1,269.3 89.3,275.3 89.6,277.7 C 90.3,279.7 94.0,279.3 95.5,276.9 C 97.2,274.3 96.0,272.3 93.7,272.9 C 95.7,273.1 98.1,272.9 100.7,272.1 M 99.8,275.3 C 101.7,273.7 103.6,271.9 104.5,270.3 C 103.1,273.9 101.3,278.8 104.6,278.9 C 107.7,278.9 110.5,274.3 112.0,270.3 C 110.4,274.9 109.3,278.8 111.7,278.8 C 112.9,278.8 114.0,277.7 115.0,276.3 M 114.8,276.8 C 118.9,274.8 124.1,269.3 125.7,264.3 C 126.5,261.5 123.8,261.3 122.8,264.3 C 120.7,270.3 118.6,278.8 121.7,278.8 C 122.8,278.8 124.0,277.8 125.0,276.3 M 137.1,271.7 C 136.1,270.1 133.8,269.8 131.7,270.5 C 128.9,271.5 127.1,273.7 127.0,275.7 C 126.7,277.9 128.3,279.1 130.5,278.9 C 132.9,278.6 135.2,276.3 136.7,273.3 L 137.9,270.3 C 136.6,273.8 135.2,278.3 137.2,278.8 C 138.3,279.0 139.4,277.7 140.4,276.3 M 140.4,276.3 C 142.5,274.7 144.8,272.1 146.0,269.5 C 146.5,270.9 149.1,271.1 151.0,270.3 C 149.4,274.3 147.8,278.8 150.4,278.8 C 151.6,278.8 152.5,277.7 153.4,276.3 M 153.7,275.3 C 155.5,273.7 157.4,271.9 158.3,270.3 C 156.9,273.9 155.7,278.5 158.8,278.5 C 161.8,278.5 164.3,274.3 165.9,270.3 C 165.0,276.3 162.7,282.3 159.7,284.9 C 157.4,286.8 155.4,285.9 156.4,283.9 C 157.7,281.3 164.5,279.3 168.9,275.9 M 178.0,261.9 C 177.2,267.3 176.9,274.3 178.0,277.5 C 178.7,279.7 181.9,278.3 185.3,270.3 C 185.8,275.3 186.4,278.9 188.7,278.9 C 191.4,278.7 194.4,270.3 195.6,262.1 M 205.3,270.3 C 201.8,270.0 199.1,272.3 198.4,275.1 C 197.9,277.8 199.8,279.3 202.5,279.1 C 205.6,278.8 208.2,276.3 208.4,273.5 C 208.6,271.1 207.1,270.1 205.3,270.3 C 206.6,271.8 208.9,272.3 211.9,272.1 M 210.8,276.3 C 212.9,274.7 215.2,272.1 216.4,269.5 C 216.9,270.9 219.5,271.1 221.3,270.3 C 219.8,274.3 218.2,278.8 220.8,278.8 C 222.0,278.8 222.9,277.7 223.8,276.3 M 235.9,271.7 C 234.9,270.1 232.6,269.8 230.5,270.5 C 227.7,271.5 225.9,273.7 225.7,275.7 C 225.5,277.9 227.1,279.1 229.3,278.9 C 231.7,278.6 234.0,276.3 235.5,273.3 L 240.2,262.3 C 237.2,270.3 234.0,278.8 236.9,278.8 C 238.1,278.8 238.8,277.7 239.8,276.3 M 327.9,276.6 C 325.1,276.2 324.6,278.8 327.4,278.8 C 332.1,278.6 339.6,268.8 343.9,261.8 C 343.6,268.8 343.4,274.8 342.6,278.4 C 338.4,279.0 332.1,278.4 328.9,277.4 M 343.9,261.8 C 348.4,261.4 350.1,266.8 349.1,271.8 C 348.4,275.8 345.9,278.2 342.6,278.4 M 349.7,276.2 C 353.7,275.4 360.5,273.8 361.2,271.4 C 361.8,269.2 357.8,269.0 354.9,271.4 C 351.9,274.0 351.8,278.2 355.7,278.4 C 358.5,278.5 361.6,277.0 363.7,275.4 M 363.3,276.8 C 367.6,274.8 373.8,268.8 375.3,263.8 C 376.2,260.8 373.3,260.8 372.3,263.8 C 369.8,270.8 367.2,280.8 366.7,284.4 C 366.4,286.8 368.8,286.4 369.3,283.8 C 369.7,280.8 369.0,278.8 368.1,277.6 C 370.5,277.8 373.9,276.8 375.5,275.8 M 375.2,276.8 C 377.6,274.8 380.3,271.8 381.5,269.8 C 379.8,273.8 378.5,278.3 381.3,278.3 C 382.5,278.3 383.8,277.3 384.8,275.8 M 382.9,266.6 L 383.3,265.8 M 384.6,276.8 C 387.0,274.8 389.2,271.8 390.2,269.8 L 387.4,278.3 C 389.1,273.8 393.0,269.8 395.5,269.8 C 398.8,269.8 394.9,278.3 397.9,278.3 C 399.2,278.3 400.7,277.3 401.7,275.8 M 401.5,276.8 C 403.9,274.8 406.6,271.8 407.8,269.8 C 406.0,273.8 404.8,278.3 407.5,278.3 C 408.8,278.3 410.1,277.3 411.1,275.8 M 409.1,266.6 L 409.6,265.8 M 410.8,276.8 C 414.2,273.8 418.3,268.8 420.3,263.3 C 417.5,270.8 414.9,278.3 418.2,278.3 C 419.4,278.3 420.7,277.3 421.7,275.8 M 414.5,268.8 L 423.7,268.4 M 421.5,276.8 C 423.9,274.8 426.6,271.8 427.8,269.8 C 426.0,273.8 424.8,278.3 427.6,278.3 C 428.8,278.3 430.1,277.3 431.1,275.8 M 429.2,266.6 L 429.6,265.8 M 440.3,269.8 C 436.6,269.5 433.7,271.8 433.1,274.6 C 432.5,277.3 434.6,278.8 437.4,278.6 C 440.7,278.3 443.4,275.8 443.7,273.0 C 443.8,270.6 442.2,269.6 440.3,269.8 C 441.7,271.3 444.1,271.8 447.3,271.6 M 445.9,276.8 C 448.3,274.8 450.5,271.8 451.5,269.8 L 448.7,278.3 C 450.4,273.8 454.3,269.8 456.8,269.8 C 460.0,269.8 456.2,278.3 459.2,278.3 C 460.5,278.3 462.0,277.3 463.0,275.8 M 573.7,265.0 C 576.5,262.2 580.0,265.6 585.3,263.0 M 581.1,263.6 C 580.4,269.8 579.5,276.8 576.5,278.4 C 573.5,280.0 569.3,278.6 568.9,275.8 C 569.3,274.2 571.9,274.6 572.3,275.8 M 578.1,273.4 C 581.1,273.8 583.4,273.3 586.9,271.8 M 588.1,277.2 C 591.8,276.4 598.1,274.8 598.7,272.4 C 599.3,270.2 595.6,270.0 592.9,272.4 C 590.2,275.0 590.0,279.2 593.7,279.4 C 596.2,279.5 599.1,278.0 601.0,276.4 M 603.4,271.8 C 606.2,269.8 608.2,271.8 607.9,275.3 C 607.6,278.8 610.0,279.8 614.2,276.8 M 613.6,270.8 C 610.3,271.8 604.2,277.8 601.3,279.2 M 614.0,277.8 C 617.1,274.8 620.9,269.8 622.7,264.3 C 620.1,271.8 617.8,279.3 620.8,279.3 C 621.9,279.3 623.1,278.3 624.1,276.8 M 617.4,269.8 L 625.8,269.4 M 624.3,275.8 C 626.1,274.2 627.9,272.4 628.8,270.8 C 627.4,274.4 625.7,279.3 628.9,279.4 C 631.9,279.4 634.7,274.8 636.2,270.8 C 634.6,275.4 633.6,279.3 635.9,279.3 C 637.1,279.3 638.1,278.2 639.1,276.8 M 650.9,272.2 C 649.9,270.6 647.7,270.3 645.6,271.0 C 642.8,272.0 641.1,274.2 641.0,276.2 C 640.8,278.4 642.3,279.6 644.4,279.4 C 646.8,279.1 649.0,276.8 650.5,273.8 L 651.7,270.8 C 650.3,274.3 649.0,278.8 650.9,279.3 C 652.0,279.5 653.2,278.2 654.1,276.8 M 654.0,277.3 C 658.0,275.3 663.0,269.8 664.6,264.8 C 665.4,262.0 662.8,261.8 661.8,264.8 C 659.7,270.8 657.6,279.3 660.6,279.3 C 661.8,279.3 663.0,278.3 663.9,276.8 M 685.8,265.2 C 683.5,261.8 676.1,262.2 676.1,265.8 C 676.1,268.8 679.8,269.8 681.7,269.8 C 677.3,269.8 672.4,271.8 673.0,275.8 C 673.6,279.8 680.5,279.8 687.0,275.6 M 689.9,276.8 C 692.2,274.8 694.0,272.8 694.9,270.8 C 693.7,275.8 693.9,279.3 695.8,279.3 C 698.1,279.3 701.1,274.8 701.4,270.8 C 701.7,272.4 703.0,272.6 704.4,272.2 M 703.0,277.8 C 705.2,275.8 707.7,272.8 708.8,270.8 C 707.2,274.8 706.1,279.3 708.6,279.3 C 709.8,279.3 710.9,278.3 711.9,276.8 M 710.1,267.6 L 710.5,266.8 M 723.7,272.2 C 722.7,270.6 720.5,270.3 718.4,271.0 C 715.7,272.0 713.9,274.2 713.8,276.2 C 713.6,278.4 715.1,279.6 717.2,279.4 C 719.6,279.1 721.8,276.8 723.3,273.8 L 727.9,262.8 C 725.0,270.8 721.9,279.3 724.7,279.3 C 725.8,279.3 726.6,278.2 727.5,276.8 M 728.0,277.2 C 731.6,276.4 737.9,274.8 738.5,272.4 C 739.1,270.2 735.5,270.0 732.8,272.4 C 730.0,275.0 729.9,279.2 733.5,279.4 C 736.0,279.5 739.0,278.0 740.9,276.4 M 740.5,277.8 C 742.8,275.8 744.8,272.8 745.8,270.8 L 743.1,279.3 C 744.8,274.8 748.3,270.8 750.6,270.8 C 753.6,270.8 750.1,279.3 752.9,279.3 C 754.0,279.3 755.4,278.3 756.4,276.8 M 767.8,272.8 C 768.0,271.2 766.1,270.4 763.9,270.8 C 760.8,271.4 758.5,273.8 758.3,276.0 C 758.1,278.4 759.8,279.6 762.4,279.5 C 765.0,279.3 767.6,278.0 769.8,276.2 M 770.1,277.2 C 773.8,276.4 780.1,274.8 780.7,272.4 C 781.3,270.2 777.6,270.0 775.0,272.4 C 772.2,275.0 772.1,279.2 775.7,279.4 C 778.2,279.5 781.2,278.0 783.1,276.4" fill="none" stroke="#333" stroke-width="2.2" stroke-linecap="round" stroke-linejoin="round"/></svg>
<div class="abs" style="left:21px;top:301.4px;width:229px;height:30px;line-height:30px;text-align:center;color:#c3272f;font-size:25px;letter-spacing:.4px;white-space:nowrap">Empathetically</div>
<div class="abs" style="left:278px;top:295.6px;font-size:19px;line-height:24px;color:#000;white-space:nowrap">Type here</div>
<div class="abs" style="left:21px;top:348.6px;width:229px;height:30px;line-height:30px;text-align:center;color:#c3272f;font-size:25px;letter-spacing:.4px;white-space:nowrap">Inquired</div>
<div class="abs" style="left:278px;top:351.1px;font-size:19px;line-height:24px;color:#000;white-space:nowrap">Type here</div>
<div class="abs" style="left:561px;top:351.1px;font-size:19px;line-height:24px;color:#000;white-space:nowrap">Type here</div>
<div class="abs" style="left:21px;top:392.6px;width:229px;height:30px;line-height:30px;text-align:center;color:#c3272f;font-size:25px;letter-spacing:.4px;white-space:nowrap">Dingy</div>
<div class="abs" style="left:278px;top:395.1px;font-size:19px;line-height:24px;color:#000;white-space:nowrap">Type here</div>
<div class="abs" style="left:561px;top:395.1px;font-size:19px;line-height:24px;color:#000;white-space:nowrap">Type here</div>
<div class="abs" style="left:21px;top:436.5px;width:229px;height:30px;line-height:30px;text-align:center;color:#c3272f;font-size:25px;letter-spacing:.4px;white-space:nowrap">Dismal</div>
<div class="abs" style="left:278px;top:439.0px;font-size:19px;line-height:24px;color:#000;white-space:nowrap">Type here</div>
<div class="abs" style="left:561px;top:439.0px;font-size:19px;line-height:24px;color:#000;white-space:nowrap">Type here</div>
<div class="abs" style="left:21px;top:480.4px;width:229px;height:30px;line-height:30px;text-align:center;color:#c3272f;font-size:25px;letter-spacing:.4px;white-space:nowrap">Morose</div>
<div class="abs" style="left:278px;top:482.9px;font-size:19px;line-height:24px;color:#000;white-space:nowrap">Type here</div>
<div class="abs" style="left:561px;top:482.9px;font-size:19px;line-height:24px;color:#000;white-space:nowrap">Type here</div>
<div class="abs" style="left:21px;top:524.4px;width:229px;height:30px;line-height:30px;text-align:center;color:#c3272f;font-size:25px;letter-spacing:.4px;white-space:nowrap">Cordially</div>
<div class="abs" style="left:278px;top:526.9px;font-size:19px;line-height:24px;color:#000;white-space:nowrap">Type here</div>
<div class="abs" style="left:561px;top:526.9px;font-size:19px;line-height:24px;color:#000;white-space:nowrap">Type here</div>
<div class="abs" style="left:21px;top:568.2px;width:229px;height:30px;line-height:30px;text-align:center;color:#c3272f;font-size:25px;letter-spacing:.4px;white-space:nowrap">Ominous</div>
<div class="abs" style="left:278px;top:570.8px;font-size:19px;line-height:24px;color:#000;white-space:nowrap">Type here</div>
<div class="abs" style="left:561px;top:570.8px;font-size:19px;line-height:24px;color:#000;white-space:nowrap">Type here</div>
<div class="abs" style="left:21px;top:612.2px;width:229px;height:30px;line-height:30px;text-align:center;color:#c3272f;font-size:25px;letter-spacing:.4px;white-space:nowrap">Tremulous</div>
<div class="abs" style="left:278px;top:614.7px;font-size:19px;line-height:24px;color:#000;white-space:nowrap">Type here</div>
<div class="abs" style="left:561px;top:614.7px;font-size:19px;line-height:24px;color:#000;white-space:nowrap">Type here</div>
<div class="abs" style="left:21px;top:656.1px;width:229px;height:30px;line-height:30px;text-align:center;color:#c3272f;font-size:25px;letter-spacing:.4px;white-space:nowrap">Tacitly</div>
<div class="abs" style="left:278px;top:658.6px;font-size:19px;line-height:24px;color:#000;white-space:nowrap">Type here</div>
<div class="abs" style="left:561px;top:658.6px;font-size:19px;line-height:24px;color:#000;white-space:nowrap">Type here</div>
<div class="abs" style="left:21px;top:700.1px;width:229px;height:30px;line-height:30px;text-align:center;color:#c3272f;font-size:25px;letter-spacing:.4px;white-space:nowrap">Melancholy</div>
<div class="abs" style="left:278px;top:697.1px;font-size:19px;line-height:24px;color:#000;white-space:nowrap">Type here</div>
<div class="abs" style="left:561px;top:697.1px;font-size:19px;line-height:24px;color:#000;white-space:nowrap">Type here</div>
<div class="abs" style="left:21px;top:744.1px;width:229px;height:30px;line-height:30px;text-align:center;color:#c3272f;font-size:25px;letter-spacing:.4px;white-space:nowrap">Obliged</div>
<div class="abs" style="left:278px;top:746.6px;font-size:19px;line-height:24px;color:#000;white-space:nowrap">Type here</div>
<div class="abs" style="left:561px;top:746.6px;font-size:19px;line-height:24px;color:#000;white-space:nowrap">Type here</div>
<div class="abs" style="left:21px;top:788.1px;width:229px;height:30px;line-height:30px;text-align:center;color:#c3272f;font-size:25px;letter-spacing:.4px;white-space:nowrap">Incredulous</div>
<div class="abs" style="left:278px;top:790.6px;font-size:19px;line-height:24px;color:#000;white-space:nowrap">Type here</div>
<div class="abs" style="left:561px;top:790.6px;font-size:19px;line-height:24px;color:#000;white-space:nowrap">Type here</div>
<svg class="abs" style="left:239.5px;top:851.5px" width="363" height="206.5" viewBox="0 0 363 206.5">
<defs><linearGradient id="dk" x1="0" x2="1" y1="0" y2="0"><stop offset="0" stop-color="#3a0c0e"/><stop offset=".12" stop-color="#5a1216"/><stop offset=".22" stop-color="#3d0c10"/><stop offset=".34" stop-color="#4a0f13"/><stop offset=".66" stop-color="#470e12"/><stop offset=".78" stop-color="#5c1317"/><stop offset=".9" stop-color="#3e0c0f"/><stop offset="1" stop-color="#4c1014"/></linearGradient>
<radialGradient id="kn" cx=".5" cy=".4" r=".6"><stop offset="0" stop-color="#b9c19a"/><stop offset=".6" stop-color="#7d8a66"/><stop offset="1" stop-color="#4f5e49"/></radialGradient></defs>
<rect width="363" height="206.5" fill="url(#dk)"/>
<ellipse cx="181" cy="168" rx="52" ry="30" fill="#1b0a08"/>
<path d="M128 92 C118 150 140 196 181 198 C222 196 244 150 234 92" fill="none" stroke="#9aa583" stroke-width="17"/>
<ellipse cx="181" cy="192" rx="26" ry="13" fill="#a8b08e"/>
<ellipse cx="181" cy="46" rx="78" ry="44" fill="#8f9b74"/>
<ellipse cx="140" cy="62" rx="30" ry="26" fill="#3f7a56"/><ellipse cx="224" cy="62" rx="30" ry="26" fill="#3f7a56"/>
<ellipse cx="150" cy="30" rx="34" ry="22" fill="#aeb58f"/><ellipse cx="214" cy="30" rx="34" ry="22" fill="#a2aa84"/>
<ellipse cx="181" cy="98" rx="38" ry="52" fill="url(#kn)"/>
<path d="M160 84 Q168 78 176 84 M188 84 Q196 78 204 84" stroke="#3d4630" stroke-width="5" fill="none"/>
<path d="M181 88 L176 116 H187 Z" fill="#6e7a58"/>
<path d="M166 130 Q181 138 197 130" stroke="#3d4630" stroke-width="5" fill="none"/>
</svg>
</div>
<div class="abs" style="left:228px;top:226px;width:1138px;height:14px;background:#e8eaed"></div>
<div class="abs" style="left:413px;top:226px;width:845px;height:14px;background:#fff"></div>
<div class="abs" style="left:228px;top:226px;width:14px;height:14px;background:#f1f3f4;border-right:1px solid #dadce0"></div>
<div class="abs" style="left:228px;top:239px;width:1138px;height:1px;background:#dadce0"></div>
<div class="abs" style="left:228px;top:240px;width:14px;height:434px;background:#fff;border-right:1px solid #e3e5e8"></div>
<svg class="abs" style="left:0;top:0" width="1366" height="768" viewBox="0 0 1366 768"><path d="M426.0,231 V234.5 M438.4,231 V234.5 M450.8,231 V234.5 M463.2,229.5 V236 M475.6,231 V234.5 M488.0,231 V234.5 M500.4,231 V234.5 M525.2,231 V234.5 M537.6,231 V234.5 M550.0,231 V234.5 M562.4,229.5 V236 M574.8,231 V234.5 M587.2,231 V234.5 M599.6,231 V234.5 M624.4,231 V234.5 M636.8,231 V234.5 M649.2,231 V234.5 M661.6,229.5 V236 M674.0,231 V234.5 M686.4,231 V234.5 M698.8,231 V234.5 M723.6,231 V234.5 M736.0,231 V234.5 M748.4,231 V234.5 M760.8,229.5 V236 M773.2,231 V234.5 M785.6,231 V234.5 M798.0,231 V234.5 M822.8,231 V234.5 M835.2,231 V234.5 M847.6,231 V234.5 M860.0,229.5 V236 M872.4,231 V234.5 M884.8,231 V234.5 M897.2,231 V234.5 M922.0,231 V234.5 M934.4,231 V234.5 M946.8,231 V234.5 M959.2,229.5 V236 M971.6,231 V234.5 M984.0,231 V234.5 M996.4,231 V234.5 M1021.2,231 V234.5 M1033.6,231 V234.5 M1046.0,231 V234.5 M1058.4,229.5 V236 M1070.8,231 V234.5 M1083.2,231 V234.5 M1095.6,231 V234.5 M1120.4,231 V234.5 M1132.8,231 V234.5 M1145.2,231 V234.5 M1157.6,229.5 V236 M1170.0,231 V234.5 M1182.4,231 V234.5 M1194.8,231 V234.5 M1219.6,231 V234.5 M1232.0,231 V234.5 M1244.4,231 V234.5 M233,245.8 H236.5 M233,258.2 H236.5 M233,270.6 H236.5 M233,295.4 H236.5 M233,307.8 H236.5 M233,320.2 H236.5 M231.5,332.6 H238 M233,345.0 H236.5 M233,357.4 H236.5 M233,369.8 H236.5 M233,394.6 H236.5 M233,407.0 H236.5 M233,419.4 H236.5 M231.5,431.8 H238 M233,444.2 H236.5 M233,456.6 H236.5 M233,469.0 H236.5 M233,493.8 H236.5 M233,506.2 H236.5 M233,518.6 H236.5 M231.5,531.0 H238 M233,543.4 H236.5 M233,555.8 H236.5 M233,568.2 H236.5 M233,593.0 H236.5 M233,605.4 H236.5 M233,617.8 H236.5 M231.5,630.2 H238 M233,642.6 H236.5 M233,655.0 H236.5 M233,667.4 H236.5" stroke="#a4a9af" stroke-width="1" fill="none"/></svg>
<div class="rn" style="left:502.8px;top:226px">1</div>
<div class="rn" style="left:602.0px;top:226px">2</div>
<div class="rn" style="left:701.2px;top:226px">3</div>
<div class="rn" style="left:800.4px;top:226px">4</div>
<div class="rn" style="left:899.6px;top:226px">5</div>
<div class="rn" style="left:998.8px;top:226px">6</div>
<div class="rn" style="left:1098.0px;top:226px">7</div>
<div class="rn" style="left:1197.2px;top:226px">8</div>
<div class="rv" style="top:273.0px">3</div>
<div class="rv" style="top:372.2px">4</div>
<div class="rv" style="top:471.4px">5</div>
<div class="rv" style="top:570.6px">6</div>
<div id="slide"></div>
<div class="abs" style="left:412px;top:240px;width:1px;height:418px;background:#e3e5e8"></div><div class="abs" style="left:1258px;top:240px;width:1px;height:418px;background:#dfe1e5"></div>
<div class="hl" style="top:275.5px"></div>
<div class="hl" style="top:326.0px"></div>
<div class="hl" style="top:370.0px"></div>
<div class="hl" style="top:414.0px"></div>
<div class="hl" style="top:457.7px"></div>
<div class="hl" style="top:501.9px"></div>
<div class="hl" style="top:545.7px"></div>
<div class="hl" style="top:589.6px"></div>
<div class="hl" style="top:633.5px"></div>
<div class="vl" style="left:434.0px"></div>
<div class="vl" style="left:662.3px"></div>
<div class="vl" style="left:944.8px"></div>
<div class="vl" style="left:1229.8px"></div>
<svg class="abs" style="left:0;top:0" width="1366" height="768" viewBox="0 0 1366 768"><path d="M 443.6,248.4 C 444.6,247.6 445.6,248.0 445.9,249.0 L 448.6,264.6 C 452.2,258.0 456.8,252.0 462.1,247.8 M 463.9,256.0 C 460.4,255.7 457.7,258.0 457.1,260.8 C 456.5,263.5 458.5,265.0 461.1,264.8 C 464.3,264.5 466.8,262.0 467.1,259.2 C 467.2,256.8 465.7,255.8 463.9,256.0 C 465.3,257.5 467.5,258.0 470.5,257.8 M 481.1,258.0 C 481.3,256.4 479.4,255.6 477.1,256.0 C 473.9,256.6 471.6,259.0 471.4,261.2 C 471.1,263.6 472.9,264.8 475.6,264.7 C 478.2,264.5 480.9,263.2 483.2,261.4 M 495.1,257.4 C 494.1,255.8 491.8,255.5 489.7,256.2 C 486.9,257.2 485.1,259.4 485.0,261.4 C 484.7,263.6 486.3,264.8 488.5,264.6 C 490.9,264.3 493.2,262.0 494.7,259.0 L 495.9,256.0 C 494.6,259.5 493.1,264.0 495.1,264.5 C 496.3,264.7 497.4,263.4 498.4,262.0 M 498.3,262.5 C 502.3,260.5 507.3,255.0 509.0,250.0 C 509.8,247.2 507.4,247.0 506.4,250.0 C 504.7,255.0 502.9,261.0 503.2,263.4 C 503.9,265.4 507.6,265.0 509.1,262.6 C 510.8,260.0 509.6,258.0 507.3,258.6 C 509.3,258.8 511.7,258.6 514.3,257.8 M 513.4,261.0 C 515.3,259.4 517.2,257.6 518.1,256.0 C 516.7,259.6 514.9,264.5 518.2,264.6 C 521.3,264.6 524.1,260.0 525.6,256.0 C 524.0,260.6 522.9,264.5 525.3,264.5 C 526.5,264.5 527.6,263.4 528.6,262.0 M 528.4,262.5 C 532.5,260.5 537.7,255.0 539.3,250.0 C 540.1,247.2 537.4,247.0 536.4,250.0 C 534.3,256.0 532.2,264.5 535.3,264.5 C 536.4,264.5 537.6,263.5 538.6,262.0 M 550.7,257.4 C 549.7,255.8 547.4,255.5 545.3,256.2 C 542.5,257.2 540.7,259.4 540.6,261.4 C 540.3,263.6 541.9,264.8 544.1,264.6 C 546.5,264.3 548.8,262.0 550.3,259.0 L 551.5,256.0 C 550.2,259.5 548.8,264.0 550.8,264.5 C 551.9,264.7 553.0,263.4 554.0,262.0 M 554.0,262.0 C 556.1,260.4 558.4,257.8 559.6,255.2 C 560.1,256.6 562.7,256.8 564.6,256.0 C 563.0,260.0 561.4,264.5 564.0,264.5 C 565.2,264.5 566.1,263.4 567.0,262.0 M 567.3,261.0 C 569.1,259.4 571.0,257.6 571.9,256.0 C 570.5,259.6 569.3,264.2 572.4,264.2 C 575.4,264.2 577.9,260.0 579.5,256.0 C 578.6,262.0 576.3,268.0 573.3,270.6 C 571.0,272.5 569.0,271.6 570.0,269.6 C 571.3,267.0 578.1,265.0 582.5,261.6 M 591.6,247.6 C 590.8,253.0 590.5,260.0 591.6,263.2 C 592.3,265.4 595.5,264.0 598.9,256.0 C 599.4,261.0 600.0,264.6 602.3,264.6 C 605.0,264.4 608.0,256.0 609.2,247.8 M 618.9,256.0 C 615.4,255.7 612.7,258.0 612.0,260.8 C 611.5,263.5 613.4,265.0 616.1,264.8 C 619.2,264.5 621.8,262.0 622.0,259.2 C 622.2,256.8 620.7,255.8 618.9,256.0 C 620.2,257.5 622.5,258.0 625.5,257.8 M 624.4,262.0 C 626.5,260.4 628.8,257.8 630.0,255.2 C 630.5,256.6 633.1,256.8 634.9,256.0 C 633.4,260.0 631.8,264.5 634.4,264.5 C 635.6,264.5 636.5,263.4 637.4,262.0 M 649.5,257.4 C 648.5,255.8 646.2,255.5 644.1,256.2 C 641.3,257.2 639.5,259.4 639.3,261.4 C 639.1,263.6 640.7,264.8 642.9,264.6 C 645.3,264.3 647.6,262.0 649.1,259.0 L 653.8,248.0 C 650.8,256.0 647.6,264.5 650.5,264.5 C 651.7,264.5 652.4,263.4 653.4,262.0 M 741.5,262.0 C 738.7,261.6 738.2,264.2 741.0,264.2 C 745.7,264.0 753.2,254.2 757.5,247.2 C 757.2,254.2 757.0,260.2 756.2,263.8 C 752.0,264.4 745.7,263.8 742.5,262.8 M 757.5,247.2 C 762.0,246.8 763.7,252.2 762.7,257.2 C 762.0,261.2 759.5,263.6 756.2,263.8 M 763.3,261.6 C 767.3,260.8 774.1,259.2 774.8,256.8 C 775.4,254.6 771.4,254.4 768.5,256.8 C 765.5,259.4 765.4,263.6 769.3,263.8 C 772.1,263.9 775.2,262.4 777.3,260.8 M 776.9,262.2 C 781.2,260.2 787.4,254.2 788.9,249.2 C 789.8,246.2 786.9,246.2 785.9,249.2 C 783.4,256.2 780.8,266.2 780.3,269.8 C 780.0,272.2 782.4,271.8 782.9,269.2 C 783.3,266.2 782.6,264.2 781.7,263.0 C 784.1,263.2 787.5,262.2 789.1,261.2 M 788.8,262.2 C 791.2,260.2 793.9,257.2 795.1,255.2 C 793.4,259.2 792.1,263.7 794.9,263.7 C 796.1,263.7 797.4,262.7 798.4,261.2 M 796.5,252.0 L 796.9,251.2 M 798.2,262.2 C 800.6,260.2 802.8,257.2 803.8,255.2 L 801.0,263.7 C 802.7,259.2 806.6,255.2 809.1,255.2 C 812.4,255.2 808.5,263.7 811.5,263.7 C 812.8,263.7 814.3,262.7 815.3,261.2 M 815.1,262.2 C 817.5,260.2 820.2,257.2 821.4,255.2 C 819.6,259.2 818.4,263.7 821.1,263.7 C 822.4,263.7 823.7,262.7 824.7,261.2 M 822.7,252.0 L 823.2,251.2 M 824.4,262.2 C 827.8,259.2 831.9,254.2 833.9,248.7 C 831.1,256.2 828.5,263.7 831.8,263.7 C 833.0,263.7 834.3,262.7 835.3,261.2 M 828.1,254.2 L 837.3,253.8 M 835.1,262.2 C 837.5,260.2 840.2,257.2 841.4,255.2 C 839.6,259.2 838.4,263.7 841.2,263.7 C 842.4,263.7 843.7,262.7 844.7,261.2 M 842.8,252.0 L 843.2,251.2 M 853.9,255.2 C 850.2,254.9 847.3,257.2 846.7,260.0 C 846.1,262.7 848.2,264.2 851.0,264.0 C 854.3,263.7 857.0,261.2 857.3,258.4 C 857.4,256.0 855.8,255.0 853.9,255.2 C 855.3,256.7 857.7,257.2 860.9,257.0 M 859.5,262.2 C 861.9,260.2 864.1,257.2 865.1,255.2 L 862.3,263.7 C 864.0,259.2 867.9,255.2 870.4,255.2 C 873.6,255.2 869.8,263.7 872.8,263.7 C 874.1,263.7 875.6,262.7 876.6,261.2 M 987.3,250.4 C 990.1,247.6 993.6,251.0 998.9,248.4 M 994.7,249.0 C 994.0,255.2 993.1,262.2 990.1,263.8 C 987.1,265.4 982.9,264.0 982.5,261.2 C 982.9,259.6 985.5,260.0 985.9,261.2 M 991.7,258.8 C 994.7,259.2 997.0,258.7 1000.5,257.2 M 1001.7,262.6 C 1005.4,261.8 1011.7,260.2 1012.3,257.8 C 1012.9,255.6 1009.2,255.4 1006.5,257.8 C 1003.8,260.4 1003.6,264.6 1007.3,264.8 C 1009.8,264.9 1012.7,263.4 1014.6,261.8 M 1017.0,257.2 C 1019.8,255.2 1021.8,257.2 1021.5,260.7 C 1021.2,264.2 1023.6,265.2 1027.8,262.2 M 1027.2,256.2 C 1023.9,257.2 1017.8,263.2 1014.9,264.6 M 1027.6,263.2 C 1030.7,260.2 1034.5,255.2 1036.3,249.7 C 1033.7,257.2 1031.4,264.7 1034.4,264.7 C 1035.5,264.7 1036.7,263.7 1037.7,262.2 M 1031.0,255.2 L 1039.4,254.8 M 1037.9,261.2 C 1039.7,259.6 1041.5,257.8 1042.4,256.2 C 1041.0,259.8 1039.3,264.7 1042.5,264.8 C 1045.5,264.8 1048.3,260.2 1049.8,256.2 C 1048.2,260.8 1047.2,264.7 1049.5,264.7 C 1050.7,264.7 1051.7,263.6 1052.7,262.2 M 1064.5,257.6 C 1063.5,256.0 1061.3,255.7 1059.2,256.4 C 1056.4,257.4 1054.7,259.6 1054.6,261.6 C 1054.4,263.8 1055.9,265.0 1058.0,264.8 C 1060.4,264.5 1062.6,262.2 1064.1,259.2 L 1065.3,256.2 C 1063.9,259.7 1062.6,264.2 1064.5,264.7 C 1065.6,264.9 1066.8,263.6 1067.7,262.2 M 1067.6,262.7 C 1071.6,260.7 1076.6,255.2 1078.2,250.2 C 1079.0,247.4 1076.4,247.2 1075.4,250.2 C 1073.3,256.2 1071.2,264.7 1074.2,264.7 C 1075.4,264.7 1076.6,263.7 1077.5,262.2 M 1099.4,250.6 C 1097.1,247.2 1089.7,247.6 1089.7,251.2 C 1089.7,254.2 1093.4,255.2 1095.3,255.2 C 1090.9,255.2 1086.0,257.2 1086.6,261.2 C 1087.2,265.2 1094.1,265.2 1100.6,261.0 M 1103.5,262.2 C 1105.8,260.2 1107.6,258.2 1108.5,256.2 C 1107.3,261.2 1107.5,264.7 1109.4,264.7 C 1111.7,264.7 1114.7,260.2 1115.0,256.2 C 1115.3,257.8 1116.6,258.0 1118.0,257.6 M 1116.6,263.2 C 1118.8,261.2 1121.3,258.2 1122.4,256.2 C 1120.8,260.2 1119.7,264.7 1122.2,264.7 C 1123.4,264.7 1124.5,263.7 1125.5,262.2 M 1123.7,253.0 L 1124.1,252.2 M 1137.3,257.6 C 1136.3,256.0 1134.1,255.7 1132.0,256.4 C 1129.3,257.4 1127.5,259.6 1127.4,261.6 C 1127.2,263.8 1128.7,265.0 1130.8,264.8 C 1133.2,264.5 1135.4,262.2 1136.9,259.2 L 1141.5,248.2 C 1138.6,256.2 1135.5,264.7 1138.3,264.7 C 1139.4,264.7 1140.2,263.6 1141.1,262.2 M 1141.6,262.6 C 1145.2,261.8 1151.5,260.2 1152.1,257.8 C 1152.7,255.6 1149.1,255.4 1146.4,257.8 C 1143.6,260.4 1143.5,264.6 1147.1,264.8 C 1149.6,264.9 1152.6,263.4 1154.5,261.8 M 1154.1,263.2 C 1156.4,261.2 1158.4,258.2 1159.4,256.2 L 1156.7,264.7 C 1158.4,260.2 1161.9,256.2 1164.2,256.2 C 1167.2,256.2 1163.7,264.7 1166.5,264.7 C 1167.6,264.7 1169.0,263.7 1170.0,262.2 M 1181.4,258.2 C 1181.6,256.6 1179.7,255.8 1177.5,256.2 C 1174.4,256.8 1172.1,259.2 1171.9,261.4 C 1171.7,263.8 1173.4,265.0 1176.0,264.9 C 1178.6,264.7 1181.2,263.4 1183.4,261.6 M 1183.7,262.6 C 1187.4,261.8 1193.7,260.2 1194.3,257.8 C 1194.9,255.6 1191.2,255.4 1188.6,257.8 C 1185.8,260.4 1185.7,264.6 1189.3,264.8 C 1191.8,264.9 1194.8,263.4 1196.7,261.8" fill="none" stroke="#262626" stroke-width="1.7" stroke-linecap="round" stroke-linejoin="round"/></svg>
<div class="red" style="left:468.1px;top:288.6px;transform:scaleX(1.033)">Empathetically</div>
<div class="red" style="left:504.0px;top:333.9px;transform:scaleX(1.061)">Inquired</div>
<div class="red" style="left:517.6px;top:377.6px;transform:scaleX(1.011)">Dingy</div>
<div class="red" style="left:511.4px;top:422.0px;transform:scaleX(1.008)">Dismal</div>
<div class="red" style="left:508.2px;top:466.1px;transform:scaleX(1.065)">Morose</div>
<div class="red" style="left:500.5px;top:510.1px;transform:scaleX(1.032)">Cordially</div>
<div class="red" style="left:499.6px;top:553.6px;transform:scaleX(1.042)">Ominous</div>
<div class="red" style="left:490.9px;top:597.6px;transform:scaleX(1.023)">Tremulous</div>
<div class="red" style="left:514.2px;top:641.7px;transform:scaleX(1.066)">Tacitly</div>
<div class="th" style="left:691.7px;top:285.7px">Type here</div>
<div class="th" style="left:691.7px;top:338.2px">Type here</div>
<div class="th" style="left:974.6px;top:338.2px">Type here</div>
<div class="th" style="left:691.7px;top:383.3px">Type here</div>
<div class="th" style="left:974.6px;top:383.3px">Type here</div>
<div class="th" style="left:691.7px;top:426.1px">Type here</div>
<div class="th" style="left:974.6px;top:426.1px">Type here</div>
<div class="th" style="left:691.7px;top:471.6px">Type here</div>
<div class="th" style="left:974.6px;top:471.6px">Type here</div>
<div class="th" style="left:691.7px;top:514.9px">Type here</div>
<div class="th" style="left:974.6px;top:514.9px">Type here</div>
<div class="th" style="left:691.7px;top:559.5px">Type here</div>
<div class="th" style="left:974.6px;top:559.5px">Type here</div>
<div class="th" style="left:691.7px;top:600.9px">Type here</div>
<div class="th" style="left:974.6px;top:600.9px">Type here</div>
<div class="th" style="left:691.7px;top:644.9px">Type here</div>
<div class="th" style="left:974.6px;top:644.9px">Type here</div>
<div class="abs" style="left:242px;top:657.5px;width:1124px;height:17px;background:#f8f9fa"></div>
<!-- scrollbars -->
<div class="abs" style="left:254px;top:662px;width:1057.5px;height:8px;border-radius:4px;background:#dadce0"></div>
<div class="abs" style="left:1354.3px;top:346px;width:7.4px;height:150px;border-radius:4px;background:#dadce0"></div>
<!-- splitter + notes -->
<div class="abs" style="left:228px;top:674px;width:1138px;height:94px;background:#fff;border-left:1px solid #dadce0"></div>
<div class="abs" style="left:228px;top:674px;width:1138px;height:1px;background:#dadce0"></div>
<div class="abs" style="left:228px;top:683px;width:1138px;height:1px;background:#e3e5e8"></div>
<div class="abs" style="left:787px;top:677.5px;width:3px;height:3px;border-radius:50%;background:#dadce0"></div>
<div class="abs" style="left:795.5px;top:677.5px;width:3px;height:3px;border-radius:50%;background:#dadce0"></div>
<div class="abs" style="left:804px;top:677.5px;width:3px;height:3px;border-radius:50%;background:#dadce0"></div>
<div class="abs" style="left:244.5px;top:693px;font-size:15.1px;line-height:22px;color:#111;white-space:nowrap">Click to add speaker notes</div>
<!-- filmstrip footer -->
<div class="abs" style="left:0;top:725px;width:228px;height:1px;background:#dadce0"></div>
<div class="abs" style="left:32px;top:725.5px;width:50px;height:2.6px;background:#17181a"></div>
<svg class="abs" style="left:46.5px;top:739.5px" width="16" height="12" viewBox="0 0 16 12"><rect x="0" y="0" width="4.2" height="11.6" fill="#202124"/><rect x="5.4" y="0" width="10.2" height="7.4" fill="#202124"/><rect x="5.4" y="8.6" width="10.2" height="3" fill="#202124"/></svg>
<svg class="abs" style="left:161px;top:740px" width="15" height="12" viewBox="0 0 15 12"><g fill="#757575"><rect x="0" y="0" width="4" height="3.3"/><rect x="5.2" y="0" width="4" height="3.3"/><rect x="10.4" y="0" width="4" height="3.3"/><rect x="0" y="4.3" width="4" height="3.3"/><rect x="5.2" y="4.3" width="4" height="3.3"/><rect x="10.4" y="4.3" width="4" height="3.3"/><rect x="0" y="8.6" width="4" height="3.3"/><rect x="5.2" y="8.6" width="4" height="3.3"/><rect x="10.4" y="8.6" width="4" height="3.3"/></g></svg>
<!-- explore button -->
<div class="abs" style="left:1263.4px;top:720px;width:38.2px;height:39px;background:#fdfdfd;border:1px solid #dadce0;border-radius:4px;box-shadow:0 1px 2px rgba(60,64,67,.15)"></div>
<svg class="abs" style="left:1273px;top:729.8px" width="19.2" height="21.2" viewBox="0 0 20 22"><path d="M2.4 0 H17.6 Q20 0 20 2.4 V16 Q20 18.4 17.6 18.4 H12.6 L10 21.6 L7.4 18.4 H2.4 Q0 18.4 0 16 V2.4 Q0 0 2.4 0 Z" fill="#757575"/><path d="M10 2.8 L11.8 7.4 L16.4 9.2 L11.8 11 L10 15.6 L8.2 11 L3.6 9.2 L8.2 7.4 Z" fill="#fff"/></svg>
<!-- side panel toggle -->
<div class="abs" style="left:1340.5px;top:717px;width:42px;height:42px;border-radius:50%;background:#fff;box-shadow:0 1px 3px rgba(60,64,67,.35)"></div>
<svg class="abs" style="left:1351.6px;top:732.8px" width="7" height="11" viewBox="0 0 7 11"><path d="M6 .8 L1.4 5.5 L6 10.2" fill="none" stroke="#4d5156" stroke-width="1.9"/></svg>
<!-- bottom edge -->
<div class="abs" style="left:0;top:760px;width:1366px;height:6px;background:linear-gradient(to bottom,rgba(255,255,255,0),#e8f1fb)"></div>
<div class="abs" style="left:0;top:766.4px;width:1366px;height:1.6px;background:#1d3c5c"></div>
</body>
</html>
